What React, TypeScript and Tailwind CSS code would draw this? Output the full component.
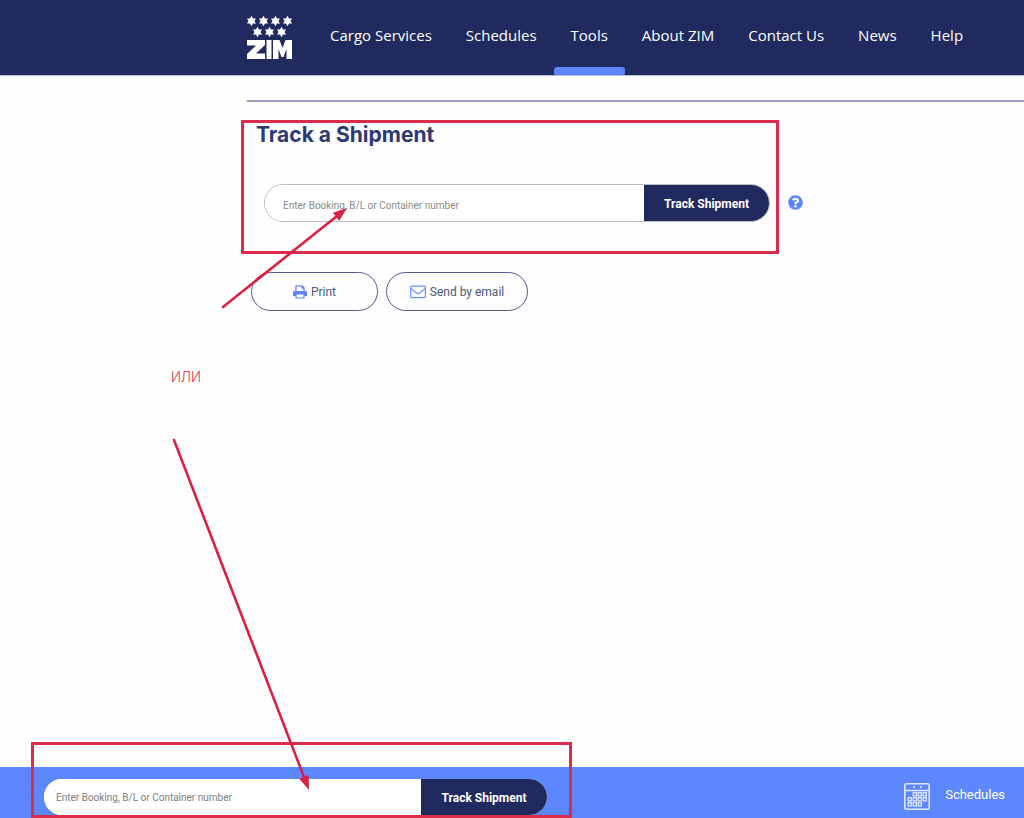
import { FaQuestionCircle } from 'react-icons/fa';

const navItems = [
  { label: 'Cargo Services' },
  { label: 'Schedules' },
  { label: 'Tools', active: true },
  { label: 'About ZIM' },
  { label: 'Contact Us' },
  { label: 'News' },
  { label: 'Help' },
];

function starPoints(cx: number, cy: number) {
  return Array.from({ length: 12 }, (_, i) => {
    const r = i % 2 === 0 ? 5.2 : 3;
    const a = (Math.PI / 6) * i - Math.PI / 2;
    return `${(cx + r * Math.cos(a)).toFixed(2)},${(cy + r * Math.sin(a)).toFixed(2)}`;
  }).join(' ');
}

const stars = [
  [4.5, 5], [16.5, 5], [28.5, 5], [40.5, 5],
  [10.5, 16], [22.5, 16], [34.5, 16],
];

function Logo() {
  return (
    <a href="#home" aria-label="ZIM" className="block h-11 w-[46px] shrink-0">
      <svg viewBox="0 0 46 44" className="h-11 w-[46px]" fill="#fff" aria-hidden="true">
        {stars.map(([x, y]) => (
          <polygon key={`${x}-${y}`} points={starPoints(x, y)} />
        ))}
        <path d="M0 24h18v5l-9 8.500h9V43H0v-5l9-8.500H0zM19.500 24h5v19h-5zM26 24h6.500l3 8 3-8H45v19h-5.500V33l-3 8h-2l-3-8v10H26z" />
      </svg>
    </a>
  );
}

function PrinterIcon() {
  return (
    <svg viewBox="0 0 14 14" className="size-3.5" fill="none" stroke="#5c85ff" aria-hidden="true">
      <path d="M3 7V.8h6l2 2V7M9 .8v2.400h2" strokeWidth="1.2" />
      <path d="M1.600 6h10.800A1.400 1.400 0 0 1 14 7.400V11h-3V9H3v2H0V7.400A1.400 1.400 0 0 1 1.600 6z" fill="#5c85ff" stroke="none" />
      <path d="M3 9h8v4H3z" strokeWidth="1.2" />
    </svg>
  );
}

function EnvelopeIcon() {
  return (
    <svg viewBox="0 0 16 14" className="h-3.5 w-4" fill="none" stroke="#6d8fff" strokeWidth="1.2" aria-hidden="true">
      <rect x=".6" y="1.2" width="14.8" height="11.4" rx="1" />
      <path d="M.8 3.500 6.400 8q1.600 1.300 3.200 0l5.600-4.500" />
    </svg>
  );
}

const cells = [
  [9, 9], [14, 9], [19, 9],
  [4, 14], [9, 14], [14, 14], [19, 14],
  [4, 19], [9, 19], [14, 19],
];

function CalendarIcon() {
  return (
    <svg viewBox="0 0 26 27" className="h-[27px] w-[26px]" fill="none" stroke="#dfe7ff" aria-hidden="true">
      <rect x=".8" y=".8" width="24.400" height="25.400" rx="1.5" strokeWidth="1.6" />
      <path d="M1 7.500h24M9 4h2M16 4h2" strokeWidth="1.3" />
      {cells.map(([x, y]) => (
        <rect key={`${x}-${y}`} x={x + 0.2} y={y + 0.7} width="3.2" height="3.2" strokeWidth="1.3" />
      ))}
    </svg>
  );
}

function Arrow({ x1, y1, x2, y2 }: { x1: number; y1: number; x2: number; y2: number }) {
  const len = Math.hypot(x2 - x1, y2 - y1);
  const ux = (x2 - x1) / len;
  const uy = (y2 - y1) / len;
  const bx = x2 - ux * 14;
  const by = y2 - uy * 14;
  const head = `${x2},${y2} ${bx - uy * 5},${by + ux * 5} ${bx + uy * 5},${by - ux * 5}`;
  return (
    <g fill="#dc2044">
      <line x1={x1} y1={y1} x2={bx} y2={by} stroke="#dc2044" strokeWidth="2.6" strokeLinecap="round" />
      <polygon points={head} />
    </g>
  );
}

export default function App() {
  return (
    <div className="relative flex min-h-screen flex-col overflow-hidden bg-[#fefefe] font-['Roboto',sans-serif]">
      <header className="flex h-[76px] items-stretch border-b border-[#b9bcd2] bg-[#202a5e] pl-[247px]">
        <div className="pt-4">
          <Logo />
        </div>
        <nav className="ml-5 flex font-['Open_Sans',sans-serif] text-[15px] text-white">
          {navItems.map((item) => (
            <a key={item.label} href="#nav" className="flex flex-col whitespace-nowrap">
              <span className="px-[17px] pt-6 leading-[22px]">{item.label}</span>
              {item.active && <span className="mt-auto h-2 rounded-t-[3px] rounded-b-[2px] bg-[#5c85ff]" />}
            </a>
          ))}
        </nav>
      </header>

      <main className="flex flex-1 flex-col pt-6">
        <hr className="ml-[247px] border-t-2 border-[#9a9dba]" />

        <div className="mt-[18px] flex items-start pl-[241px]">
          <section className="h-[134px] w-[538px] border-[3px] border-[#dc2c4c] pl-3">
            <h1 className="font-['Inter',sans-serif] text-[21px] leading-6 font-bold text-[#2b3a72]">Track a Shipment</h1>
            <form className="mt-[37px] ml-2 flex h-[38px] w-[506px] overflow-hidden rounded-full border border-[#bcbcbc]">
              <input
                aria-label="Shipment number"
                placeholder="Enter Booking, B/L or Container number"
                className="min-w-0 flex-1 bg-white pt-1 pl-[18px] text-[10px] outline-none placeholder:text-[#8a8a8a]"
              />
              <button type="button" className="w-[125px] bg-[#202a5e] pt-px text-xs font-bold text-white">Track Shipment</button>
            </form>
          </section>
          <button type="button" aria-label="Help with tracking" className="mt-[75px] ml-[9px] text-[#5c85ff]">
            <FaQuestionCircle className="size-[15px]" />
          </button>
        </div>

        <div className="mt-[18px] flex gap-2 pl-[251px] text-xs text-[#4a567c]">
          <button type="button" className="flex h-[39px] w-[127px] items-center justify-center gap-1 rounded-full border border-[#535b8c]">
            <PrinterIcon />
            Print
          </button>
          <button type="button" className="flex h-[39px] w-[142px] items-center justify-center gap-1 rounded-full border border-[#535b8c]">
            <EnvelopeIcon />
            Send by email
          </button>
        </div>

        <p className="mt-14 pl-[171px] text-sm leading-5 font-light text-[#dc2044]">ИЛИ</p>
      </main>

      <footer className="relative flex h-[51px] items-start bg-[#5c87ff] pt-3 pr-[19px] pl-11">
        <form className="flex h-9 w-[503px] overflow-hidden rounded-full bg-white">
          <input
            aria-label="Quick shipment number"
            placeholder="Enter Booking, B/L or Container number"
            className="min-w-0 flex-1 bg-white pt-px pl-3 text-[10px] outline-none placeholder:text-[#808080]"
          />
          <button type="button" className="w-[126px] bg-[#202a5e] pt-px text-xs font-bold text-white">Track Shipment</button>
        </form>
        <a href="#schedules" className="mt-1 ml-auto flex items-center gap-[15px] text-[13px] text-white">
          <CalendarIcon />
          <span className="pb-1">Schedules</span>
        </a>
        <div className="pointer-events-none absolute bottom-0 left-[31px] h-[76px] w-[541px] border-[3px] border-[#dc2c4c]" />
      </footer>

      <svg className="pointer-events-none absolute top-0 left-0" width="1024" height="818" aria-hidden="true">
        <Arrow x1={223} y1={307} x2={347} y2={208} />
        <Arrow x1={174} y1={440} x2={309} y2={790} />
      </svg>
    </div>
  );
}
